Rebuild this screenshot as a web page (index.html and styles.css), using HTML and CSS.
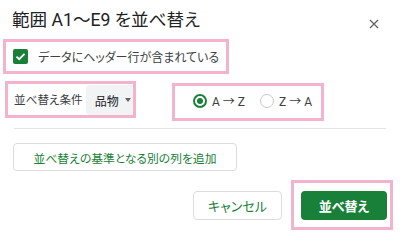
FILE: index.html
```html
<!DOCTYPE html>
<html lang="ja">
<head>
<meta charset="utf-8">
<link rel="stylesheet" href="styles.css">
</head>
<body>
<div class="dialog">
  <div class="header">
    <div class="title">範囲 A1〜E9 を並べ替え</div>
    <svg class="close" width="10" height="10" viewBox="0 0 10 10"><path d="M1 1L9 9M9 1L1 9" stroke="#5f6368" stroke-width="1.3" fill="none"/></svg>
  </div>
  <div class="hl hl-check">
    <span class="checkbox"><svg width="15" height="15" viewBox="0 0 15 15"><rect x="0" y="0" width="15" height="15" rx="2" fill="#188038"/><path d="M3.5 7.6L6.2 10.2L11.5 4.8" stroke="#fff" stroke-width="1.8" fill="none"/></svg></span>
    <span class="check-label">データにヘッダー行が含まれている</span>
  </div>
  <div class="row">
    <div class="hl hl-sortby">
      <span class="label">並べ替え条件</span>
      <div class="select"><span>品物</span><span class="caret"></span></div>
    </div>
    <div class="hl hl-radios">
      <label class="radio"><span class="dot on"></span><span class="rtext">A → Z</span></label>
      <label class="radio"><span class="dot"></span><span class="rtext">Z → A</span></label>
    </div>
  </div>
  <div class="divider"></div>
  <button class="btn btn-add">並べ替えの基準となる別の列を追加</button>
  <div class="footer">
    <button class="btn btn-cancel">キャンセル</button>
    <div class="hl hl-sort"><button class="btn btn-sort">並べ替え</button></div>
  </div>
</div>
</body>
</html>
```

FILE: styles.css
```css
* { box-sizing: border-box; }
html, body { margin: 0; padding: 0; background: #fff; }
body {
  width: 400px;
  height: 237px;
  overflow: hidden;
  font-family: Roboto, "Noto Sans CJK JP", sans-serif;
  font-feature-settings: "palt";
  color: #3c4043;
  white-space: nowrap;
}
.dialog { width: 400px; }
.header {
  height: 39px;
  display: flex;
  align-items: flex-start;
  justify-content: space-between;
  padding: 9px 21px 0 12px;
}
.title {
  font-size: 17.6px;
  line-height: 22px;
  color: #202124;
}
.close { margin-top: 10px; }
.hl { border: 3px solid #f3b3cd; }
.hl-check {
  margin-left: 3px;
  width: 226px;
  height: 35px;
  display: flex;
  align-items: center;
  padding-left: 7px;
}
.checkbox { display: flex; width: 15px; height: 15px; }
.check-label {
  margin-left: 10px;
  font-size: 12px;
  color: #3c4043;
}
.row {
  display: flex;
  align-items: flex-start;
  margin-top: 7px;
  height: 47px;
}
.hl-sortby {
  margin-left: 5px;
  width: 131px;
  height: 37px;
  display: flex;
  align-items: stretch;
  padding: 1px 0 0 6px;
  overflow: hidden;
}
.label {
  font-size: 11.6px;
  line-height: 31px;
  color: #3c4043;
}
.select {
  margin-left: 3px;
  flex: 1;
  background: #f1f3f4;
  border-radius: 4px 0 0 4px;
  display: flex;
  align-items: center;
  padding-left: 9px;
  font-size: 12px;
  color: #202124;
}
.caret {
  margin-left: 6px;
  width: 0;
  height: 0;
  border-left: 3.5px solid transparent;
  border-right: 3.5px solid transparent;
  border-top: 4px solid #5f6368;
}
.hl-radios {
  margin-left: 36px;
  margin-top: 2px;
  width: 152px;
  height: 38px;
  display: flex;
  align-items: center;
  padding: 0 0 3px 18px;
}
.radio { display: flex; align-items: center; }
.radio + .radio { margin-left: 15px; }
.dot {
  width: 14px;
  height: 14px;
  border-radius: 50%;
  border: 1.5px solid #c7c9cc;
  position: relative;
}
.dot.on { border: 2px solid #188038; }
.dot.on::after {
  content: "";
  position: absolute;
  left: 2px; top: 2px;
  width: 6px; height: 6px;
  border-radius: 50%;
  background: #188038;
}
.rtext {
  margin-left: 5px;
  font-size: 12px;
  color: #3c4043;
}
.divider {
  margin-left: 14px;
  width: 372px;
  height: 1px;
  background: #e3e4e6;
}
.btn {
  font-family: Roboto, "Noto Sans CJK JP", sans-serif;
  font-feature-settings: "palt";
  border-radius: 4px;
  cursor: pointer;
  padding: 0;
}
.btn-add {
  display: block;
  margin: 14px 0 0 13px;
  width: 224px;
  height: 28px;
  background: #fff;
  border: 1px solid #dadce0;
  color: #188038;
  font-size: 11.8px;
}
.footer {
  display: flex;
  justify-content: flex-end;
  align-items: center;
  margin-top: 9px;
  padding-right: 7px;
}
.btn-cancel {
  width: 89px;
  height: 29px;
  background: #fff;
  border: 1px solid #dadce0;
  color: #188038;
  font-size: 13px;
  margin-right: 9px;
}
.hl-sort {
  padding: 8px 3px 7px 7px;
}
.btn-sort {
  display: block;
  width: 86px;
  height: 29px;
  background: #188038;
  border: none;
  color: #fff;
  font-size: 13px;
  font-weight: 700;
}
```
